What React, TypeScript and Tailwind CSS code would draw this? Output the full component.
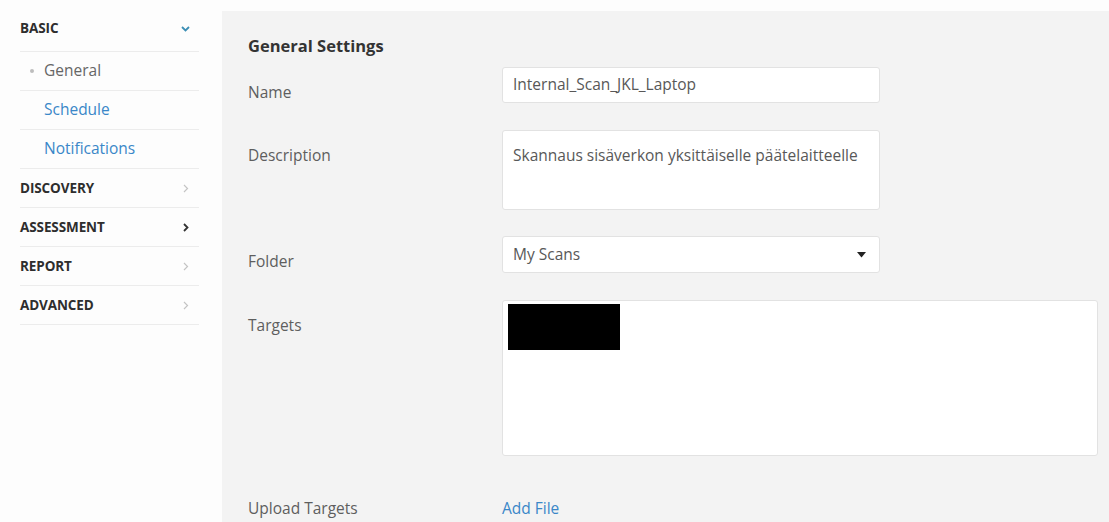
import React from "react";

const font = { fontFamily: '"Open Sans", "Liberation Sans", sans-serif' };

function ChevronRight({ dark }: { dark?: boolean }) {
  return (
    <svg width="6" height="9" viewBox="0 0 6 9" className="shrink-0">
      <path
        d="M1 1 L4.5 4.5 L1 8"
        fill="none"
        stroke={dark ? "#333" : "#c4c4c4"}
        strokeWidth={dark ? 1.8 : 1.2}
      />
    </svg>
  );
}

function ChevronDown() {
  return (
    <svg width="9" height="6" viewBox="0 0 9 6" className="shrink-0">
      <path d="M1 1 L4.5 4.5 L8 1" fill="none" stroke="#3d8fb5" strokeWidth="1.8" />
    </svg>
  );
}

function Section({ title, dark }: { title: string; dark?: boolean }) {
  return (
    <div className="flex h-[39px] items-center justify-between border-b border-[#ececec] pr-[10px]">
      <span className="text-[13.5px] font-bold tracking-[-0.1px] text-[#2e2e2e]">{title}</span>
      <ChevronRight dark={dark} />
    </div>
  );
}

function SubItem({ label, active }: { label: string; active?: boolean }) {
  return (
    <div className="flex h-[39px] items-center border-b border-[#ececec] pl-[10px]">
      {active ? (
        <span className="mr-[10px] h-[4px] w-[4px] rounded-full bg-[#bdbdbd]" />
      ) : (
        <span className="mr-[10px] w-[4px]" />
      )}
      <span className={`text-[15.5px] ${active ? "text-[#666]" : "text-[#3a87c8]"}`}>{label}</span>
    </div>
  );
}

function Row({ label, children, labelPad = "pt-[15px]" }: { label: string; children: React.ReactNode; labelPad?: string }) {
  return (
    <div className="flex">
      <div className={`w-[254px] shrink-0 text-[15.5px] leading-[20px] text-[#5e5e5e] ${labelPad}`}>{label}</div>
      {children}
    </div>
  );
}

export default function App() {
  return (
    <div className="flex h-[522px] w-[1109px] overflow-hidden bg-[#fdfdfd]" style={font}>
      <aside className="w-[222px] shrink-0 pl-[20px] pr-[23px] pt-[10px]">
        <div className="flex h-[42px] items-center justify-between border-b border-[#ececec] pb-[4px] pr-[9px]">
          <span className="text-[13.5px] font-bold tracking-[-0.1px] text-[#2e2e2e]">BASIC</span>
          <ChevronDown />
        </div>
        <SubItem label="General" active />
        <SubItem label="Schedule" />
        <SubItem label="Notifications" />
        <Section title="DISCOVERY" />
        <Section title="ASSESSMENT" dark />
        <Section title="REPORT" />
        <Section title="ADVANCED" />
      </aside>

      <main className="mt-[11px] flex-1 bg-[#f3f3f3] pl-[26px] pt-[24px]">
        <h2 className="text-[16.5px] font-bold leading-[22px] text-[#333]">General Settings</h2>

        <div className="mt-[10px] flex flex-col">
          <Row label="Name">
            <div className="flex h-[36px] w-[378px] items-center rounded-[3px] border border-[#e2e2e2] bg-white px-[10px] text-[15.5px] text-[#585858]">
              Internal_Scan_JKL_Laptop
            </div>
          </Row>

          <div className="h-[27px]" />
          <Row label="Description">
            <div className="h-[80px] w-[378px] rounded-[3px] border border-[#e2e2e2] bg-white px-[10px] pt-[14px] text-[15.5px] leading-[20px] text-[#585858]">
              Skannaus sisäverkon yksittäiselle päätelaitteelle
            </div>
          </Row>

          <div className="h-[26px]" />
          <Row label="Folder">
            <div className="flex h-[37px] w-[378px] items-center justify-between rounded-[3px] border border-[#e2e2e2] bg-white pl-[10px] pr-[13px] text-[15.5px] text-[#585858]">
              <span>My Scans</span>
              <svg width="9" height="6" viewBox="0 0 9 6">
                <path d="M0 0 H9 L4.5 5.5 Z" fill="#222" />
              </svg>
            </div>
          </Row>

          <div className="h-[27px]" />
          <Row label="Targets">
            <div className="h-[156px] w-[596px] rounded-[3px] border border-[#e2e2e2] bg-white pl-[5px] pt-[3px]">
              <div className="h-[46px] w-[112px] bg-black" />
            </div>
          </Row>

          <div className="h-[42px]" />
          <Row label="Upload Targets" labelPad="pt-0">
            <span className="text-[15.5px] leading-[20px] text-[#3a87c8]">Add File</span>
          </Row>
        </div>
      </main>
    </div>
  );
}
